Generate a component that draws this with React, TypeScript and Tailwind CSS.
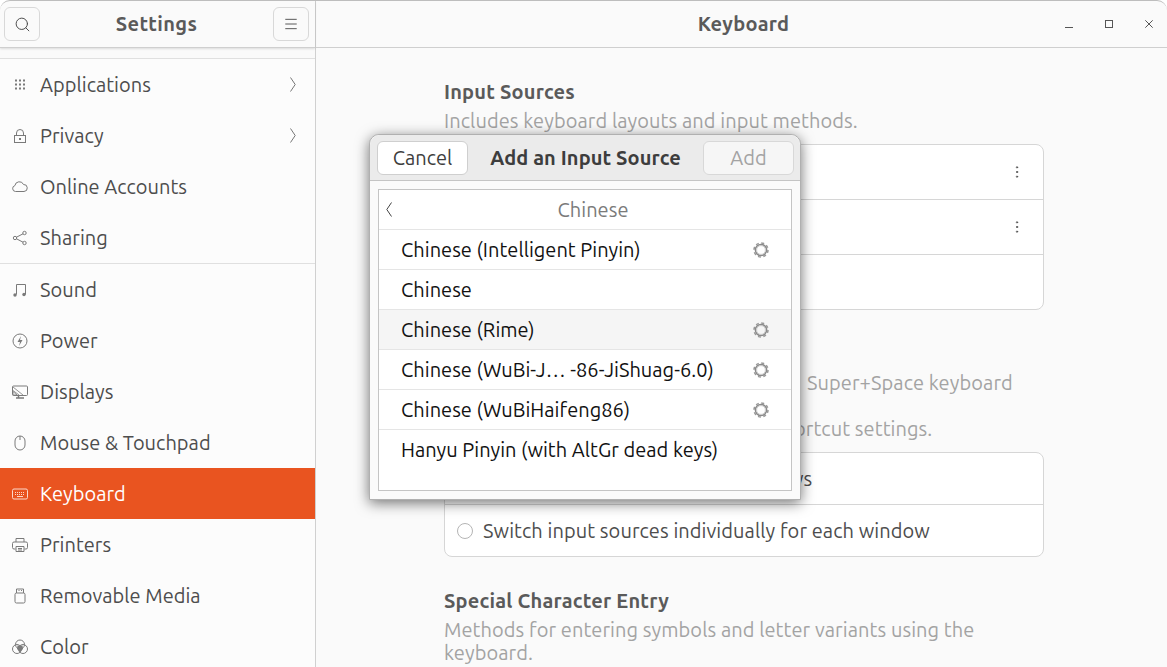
import React from 'react';
import { Search, Menu, MoreVertical } from 'lucide-react';

const Icon: React.FC<{ children: React.ReactNode }> = ({ children }) => (
  <svg viewBox="0 0 16 16" fill="none" stroke="currentColor" strokeWidth="1" className="w-4 h-4 flex-shrink-0">
    {children}
  </svg>
);

const navTop = [
  {
    label: 'Applications',
    chevron: true,
    icon: (
      <g fill="currentColor" stroke="none">
        {[2.5, 6.5, 10.5].map((y) => [3, 7, 11].map((x) => <rect key={`${x}-${y}`} x={x} y={y} width="2" height="2" />))}
      </g>
    ),
  },
  {
    label: 'Privacy',
    chevron: true,
    icon: (
      <>
        <rect x="2.5" y="7.5" width="11" height="7" />
        <path d="M4.5 7.5V5a3.5 3.5 0 0 1 7 0v2.5" />
        <rect x="7" y="10" width="2" height="2" fill="currentColor" stroke="none" />
      </>
    ),
  },
  {
    label: 'Online Accounts',
    icon: <path d="M3.5 12.5a3 3 0 0 1-.6-5.9A4.5 4.5 0 0 1 11.5 5.5a3.5 3.5 0 0 1 .5 7z" />,
  },
  {
    label: 'Sharing',
    icon: (
      <>
        <circle cx="3" cy="8" r="1.7" />
        <circle cx="12.5" cy="3" r="1.7" />
        <circle cx="12.5" cy="13" r="1.7" />
        <path d="M4.5 7.2l6.5-3.4M4.5 8.8l6.5 3.4" />
      </>
    ),
  },
];

const navBottom = [
  {
    label: 'Sound',
    icon: (
      <>
        <path d="M4.5 12.5V2.5h9v10" />
        <circle cx="3" cy="13" r="1.7" fill="currentColor" stroke="none" />
        <circle cx="12" cy="12.5" r="1.7" fill="currentColor" stroke="none" />
      </>
    ),
  },
  {
    label: 'Power',
    icon: (
      <>
        <circle cx="8" cy="8" r="7" />
        <path d="M9 3L5.5 9H8l-1 4 3.5-6H8z" fill="currentColor" stroke="none" />
      </>
    ),
  },
  {
    label: 'Displays',
    icon: (
      <>
        <rect x="0.5" y="2" width="15" height="9.5" rx="1" />
        <path d="M1 3l10 8M1 6.5l6 4.5M1 11V7.5l4 3.5z" strokeWidth="0.8" />
        <path d="M6.5 11.5v2M4 14h8" strokeWidth="1.5" />
      </>
    ),
  },
  {
    label: 'Mouse & Touchpad',
    icon: (
      <>
        <rect x="3" y="1" width="10" height="14" rx="5" />
        <path d="M8 1v4" />
      </>
    ),
  },
  {
    label: 'Keyboard',
    active: true,
    icon: (
      <>
        <rect x="0.5" y="3" width="15" height="10" rx="1.5" />
        <path d="M3 6.5h10M3 8.5h10" strokeDasharray="1 1" />
        <path d="M5 10.5h6" />
      </>
    ),
  },
  {
    label: 'Printers',
    icon: (
      <>
        <path d="M4 5V1.5h8V5" />
        <path d="M3.5 12H2a1.5 1.5 0 0 1-1.5-1.5V6.5A1.5 1.5 0 0 1 2 5h12a1.5 1.5 0 0 1 1.5 1.5v4A1.5 1.5 0 0 1 14 12h-1.5" />
        <path d="M4 9.5h8v5H4zM6 11.5h4M6 13h4" />
      </>
    ),
  },
  {
    label: 'Removable Media',
    icon: (
      <>
        <rect x="3" y="5" width="10" height="10" rx="1.5" />
        <path d="M4.5 5V1h7v4M6.5 2.5h1M9 2.5h1" />
      </>
    ),
  },
  {
    label: 'Color',
    icon: (
      <>
        <circle cx="8" cy="5.5" r="4.5" />
        <circle cx="5" cy="10" r="4.5" />
        <circle cx="11" cy="10" r="4.5" />
        <path d="M5.5 6.5h5L11 10l-3 3-3-3z" fill="currentColor" stroke="none" />
      </>
    ),
  },
];

const Chevron: React.FC<{ flip?: boolean; className?: string }> = ({ flip, className }) => (
  <svg viewBox="0 0 6 15" fill="none" stroke="currentColor" strokeWidth="1" className={`w-[6px] h-[15px] ${className ?? ''}`}>
    <path d={flip ? 'M5.5 0.5L0.8 7.5l4.7 7' : 'M0.5 0.5L5.2 7.5l-4.7 7'} />
  </svg>
);

const NavRow: React.FC<{ label: string; icon: React.ReactNode; chevron?: boolean; active?: boolean }> = ({ label, icon, chevron, active }) => (
  <div className={`h-[51px] flex items-center pl-[12px] pr-[19px] ${active ? 'bg-[#e95420] text-white' : 'text-[#4d4d4d]'}`}>
    <span className={active ? 'text-[#fbd9cc]' : 'text-[#7a7a7a]'}>
      <Icon>{icon}</Icon>
    </span>
    <span className="ml-[12px] flex-1 text-[20px] tracking-[0.03px]">{label}</span>
    {chevron && <Chevron className="text-[#777]" />}
  </div>
);

const Gear: React.FC = () => (
  <svg viewBox="0 0 16 16" className="w-4 h-4" fill="none">
    <circle cx="8" cy="8" r="7" stroke="#999" strokeWidth="1.5" strokeDasharray="3 2.5" />
    <circle cx="8" cy="8" r="5.6" stroke="#8a8a8a" strokeWidth="1.5" />
    <circle cx="8" cy="8" r="4.4" stroke="#c4c4c4" strokeWidth="0.8" />
  </svg>
);

const sources = [
  { label: 'Chinese (Intelligent Pinyin)', gear: true },
  { label: 'Chinese' },
  { label: 'Chinese (Rime)', gear: true, hover: true },
  { label: 'Chinese (WuBi-J… -86-JiShuag-6.0)', gear: true },
  { label: 'Chinese (WuBiHaifeng86)', gear: true },
  { label: 'Hanyu Pinyin (with AltGr dead keys)', last: true },
];

export default function App() {
  return (
    <div className="relative w-[1167px] h-[667px] overflow-hidden bg-[#fafafa] flex border-t border-[#bdbdbd] rounded-t-[10px] font-['Ubuntu','Noto_Sans','Open_Sans',sans-serif]">
      {/* sidebar */}
      <aside className="w-[316px] flex-shrink-0 border-r border-[#d0d0d0] flex flex-col">
        <header className="h-[47px] flex-shrink-0 flex items-center justify-between pl-[4px] pr-[6px] border-b border-[#cfcfcf] shadow-[0_1px_2px_rgba(0,0,0,0.12)]">
          <div className="w-[36px] h-[34px] border border-[#d8d8d8] rounded-[6px] flex items-center justify-center">
            <Search className="w-[17px] h-[17px] text-[#4d4d4d]" strokeWidth={1.4} />
          </div>
          <span className="text-[20px] font-bold tracking-[0.35px] text-[#5a5a5a]">Settings</span>
          <div className="w-[36px] h-[34px] border border-[#d8d8d8] rounded-[6px] flex items-center justify-center">
            <Menu className="w-4 h-4 text-[#4d4d4d]" strokeWidth={1.4} />
          </div>
        </header>
        <div className="mt-[10px] border-t border-[#e0e0e0] bg-[#fcfcfc] flex-1">
          <div className="border-b border-[#e0e0e0]">
            {navTop.map((n) => (
              <NavRow key={n.label} {...n} />
            ))}
          </div>
          {navBottom.map((n) => (
            <NavRow key={n.label} {...n} />
          ))}
        </div>
      </aside>

      {/* main */}
      <main className="flex-1 flex flex-col min-w-0">
        <header className="h-[47px] flex-shrink-0 relative flex items-center justify-center pl-[4px] border-b border-[#cfcfcf]">
          <span className="text-[20px] font-bold tracking-[0.25px] text-[#5a5a5a]">Keyboard</span>
          <div className="absolute right-[14px] top-[19px] flex items-center gap-[32px] text-[#555]">
            <svg viewBox="0 0 8 8" className="w-2 h-2" stroke="currentColor" fill="none">
              <path d="M0 7.5h8" />
            </svg>
            <svg viewBox="0 0 8 8" className="w-2 h-2" stroke="currentColor" fill="none">
              <rect x="0.5" y="0.5" width="7" height="7" />
            </svg>
            <svg viewBox="0 0 8 8" className="w-2 h-2" stroke="currentColor" fill="none">
              <path d="M0.3 0.3l7.4 7.4M7.7 0.3l-7.4 7.4" />
            </svg>
          </div>
        </header>

        <div className="w-[600px] ml-[128px] pt-[32px] text-[20px] leading-[23px] tracking-[0.08px]">
          <h2 className="font-bold tracking-[0.2px] text-[#5a5a5a]">Input Sources</h2>
          <p className="mt-[6px] text-[#a3a3a3]">Includes keyboard layouts and input methods.</p>

          <div className="mt-[12px] bg-white border border-[#d6d6d6] rounded-[8px]">
            <div className="h-[55px] flex items-center justify-end pr-[18px] border-b border-[#d6d6d6]">
              <MoreVertical className="w-4 h-4 text-[#555]" strokeWidth={1.5} />
            </div>
            <div className="h-[55px] flex items-center justify-end pr-[18px] border-b border-[#d6d6d6]">
              <MoreVertical className="w-4 h-4 text-[#555]" strokeWidth={1.5} />
            </div>
            <div className="h-[54px]" />
          </div>

          <p className="mt-[61px] pl-[363px] text-[#a3a3a3]">Super+Space keyboard</p>
          <p className="mt-[23px] pl-[350px] text-[#a3a3a3]">ortcut settings.</p>

          <div className="mt-[12px] bg-white border border-[#d6d6d6] rounded-[8px] text-[#4d4d4d]">
            <div className="h-[52px] flex items-center pl-[343px] border-b border-[#d6d6d6]">ws</div>
            <div className="h-[51px] flex items-center pl-[12px]">
              <span className="w-4 h-4 rounded-full border border-[#b5b5b5] mr-[10px]" />
              Switch input sources individually for each window
            </div>
          </div>

          <h2 className="mt-[32px] font-bold tracking-[0.2px] text-[#5a5a5a]">Special Character Entry</h2>
          <p className="mt-[6px] text-[#a3a3a3]">Methods for entering symbols and letter variants using the keyboard.</p>
        </div>
      </main>

      {/* dialog */}
      <div className="absolute left-[369px] top-[133px] w-[432px] h-[366px] bg-[#fafafa] border border-[#b0b0b0] rounded-t-[10px] shadow-[0_3px_14px_rgba(0,0,0,0.55)] flex flex-col text-[20px] tracking-[0.03px]">
        <div className="h-[46px] flex-shrink-0 bg-[#ebebeb] border-b border-[#c4c4c4] rounded-t-[10px] flex items-center justify-between pl-[7px] pr-[6px]">
          <div className="w-[91px] h-[34px] bg-white border border-[#cfcfcf] rounded-[6px] flex items-center justify-center text-[#3d3d3d]">Cancel</div>
          <span className="font-bold tracking-[0.1px] text-[#3d3d3d]">Add an Input Source</span>
          <div className="w-[91px] h-[34px] bg-[#f6f6f6] border border-[#d8d8d8] rounded-[6px] flex items-center justify-center text-[#a3a3a3]">Add</div>
        </div>
        <div className="ml-[8px] mr-[8px] my-[8px] flex-1 bg-white border border-[#c4c4c4]">
          <div className="relative h-[40px] flex items-center justify-center pl-[16px] border-b border-[#e5e5e5] text-[#7a7a7a]">
            <Chevron flip className="absolute left-[7px] text-[#444]" />
            Chinese
          </div>
          {sources.map((s) => (
            <div key={s.label} className={`h-[40px] flex items-center justify-between pl-[22px] pr-[22px] text-[#111] ${s.last ? '' : 'border-b border-[#e5e5e5]'} ${s.hover ? 'bg-[#f5f5f5]' : ''}`}>
              {s.label}
              {s.gear && <Gear />}
            </div>
          ))}
        </div>
      </div>
    </div>
  );
}
